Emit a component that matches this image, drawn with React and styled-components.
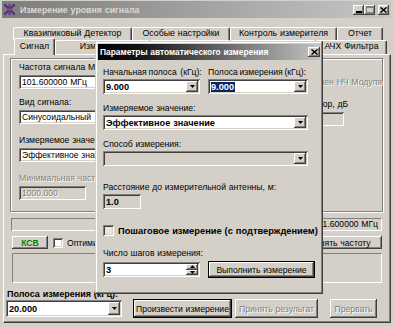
import React from 'react'
import styled, { createGlobalStyle } from 'styled-components'

const GlobalStyle = createGlobalStyle`
  html, body { margin: 0; padding: 0; background: #d4d0c8; }
  body {
    font-family: "Liberation Sans", Arial, sans-serif;
    font-size: 8.6px;
    word-spacing: 0.4px;
    color: #000;
  }
  * { box-sizing: border-box; }
`

const raised = `
  background: #d4d0c8;
  box-shadow: inset -1px -1px #404040, inset 1px 1px #fff, inset -2px -2px #808080, inset 2px 2px #d4d0c8;
`

const sunken = `
  box-shadow: inset 1px 1px #808080, inset -1px -1px #fff, inset 2px 2px #404040, inset -2px -2px #d4d0c8;
`

const Window = styled.div`
  position: relative;
  width: 393px;
  height: 327px;
  overflow: hidden;
  background: #d4d0c8;
  display: flex;
  flex-direction: column;
`

const TitleBar = styled.div`
  height: 17px;
  margin: 1px 2px 0;
  padding: 0 2px 0 1px;
  display: flex;
  align-items: center;
  gap: 4px;
  background: linear-gradient(90deg, #7c7c7c, #c6c6c6);
`

const TitleText = styled.span`
  color: #dcd8d0;
  font-weight: bold;
  font-size: 8.8px;
  white-space: nowrap;
`

const CaptionButtons = styled.div`
  margin-left: auto;
  display: flex;
`

const CaptionButton = styled.div`
  ${raised};
  width: 11px;
  height: 10px;
  margin-left: ${({ $gap }) => $gap || 0}px;
  display: flex;
  align-items: center;
  justify-content: center;
`

const TabStrip = styled.div`
  margin-top: 9px;
  display: flex;
  flex-direction: column;
`

const TabRow = styled.div`
  display: flex;
  height: ${({ $h }) => $h}px;
  margin-left: ${({ $left }) => $left}px;
  position: relative;
  z-index: ${({ $z }) => $z};
`

const Tab = styled.div`
  width: ${({ $w }) => $w}px;
  height: ${({ $active }) => ($active ? 'calc(100% + 3px)' : '100%')};
  margin-top: ${({ $active }) => ($active ? -2 : 0)}px;
  background: #d4d0c8;
  border-top: 1px solid #fff;
  border-left: 1px solid #fff;
  border-right: 1px solid #404040;
  box-shadow: inset -1px 0 #808080;
  border-radius: 2px 2px 0 0;
  display: flex;
  justify-content: center;
  font-size: 8.8px;
  line-height: 10px;
  padding-top: ${({ $active }) => ($active ? 2 : 0)}px;
  white-space: nowrap;
  overflow: hidden;
`

const Page = styled.div`
  margin-left: 3px;
  width: 388px;
  height: 269px;
  border: 1px solid;
  border-color: #fff #404040 #404040 #fff;
  box-shadow: inset -1px -1px #808080;
  display: flex;
  flex-direction: column;
  position: relative;
  z-index: 1;
`

const GroupBox = styled.div`
  margin: 3px 7px 0 6px;
  height: 154px;
  border: 1px solid #808080;
  box-shadow: inset 1px 1px #fff, 1px 1px #fff;
  display: flex;
  justify-content: space-between;
  padding: 3px 7px 0 8px;
`

const Column = styled.div`
  width: ${({ $w }) => $w}px;
  display: flex;
  flex-direction: column;
`

const FieldLabel = styled.div`
  height: 10px;
  line-height: 10px;
  margin-top: ${({ $mt }) => $mt || 0}px;
  margin-left: ${({ $ml }) => $ml || 0}px;
  color: ${({ $disabled }) => ($disabled ? '#808080' : '#000')};
  text-shadow: ${({ $disabled }) => ($disabled ? '1px 1px #fff' : 'none')};
  word-spacing: ${({ $tight }) => ($tight ? '-0.6px' : 'inherit')};
  white-space: pre;
`

const Edit = styled.div`
  ${sunken};
  margin-top: ${({ $mt }) => $mt || 0}px;
  width: ${({ $w }) => $w}px;
  height: ${({ $h }) => $h || 14}px;
  background: ${({ $bg }) => $bg || '#fff'};
  color: ${({ $disabled }) => ($disabled ? '#808080' : '#000')};
  text-shadow: ${({ $disabled }) => ($disabled ? '1px 1px #fff' : 'none')};
  font-weight: ${({ $bold }) => ($bold ? 'bold' : 'normal')};
  font-size: ${({ $bold }) => ($bold ? '9.2px' : 'inherit')};
  padding-left: 3px;
  display: flex;
  align-items: center;
  white-space: nowrap;
  overflow: hidden;
  flex-shrink: 0;
`

const CheckRow = styled.div`
  margin-top: ${({ $mt }) => $mt || 0}px;
  height: 11px;
  display: flex;
  align-items: center;
  gap: ${({ $gap }) => $gap || 4}px;
  font-weight: ${({ $bold }) => ($bold ? 'bold' : 'normal')};
  font-size: ${({ $bold }) => ($bold ? '9.3px' : 'inherit')};
  color: ${({ $disabled }) => ($disabled ? '#808080' : '#000')};
  text-shadow: ${({ $disabled }) => ($disabled ? '1px 1px #fff' : 'none')};
  white-space: nowrap;
`

const CheckBox = styled.div`
  ${sunken};
  width: ${({ $size }) => $size || 10}px;
  height: ${({ $size }) => $size || 10}px;
  background: ${({ $bg }) => $bg || '#fff'};
  flex-shrink: 0;
  margin-left: ${({ $ml }) => $ml || 0}px;
`

const FreqRow = styled.div`
  margin: 6px 8px 0 7px;
  height: 13px;
  display: flex;
  gap: 3px;
`

const StaticField = styled.div`
  flex: ${({ $grow }) => ($grow ? 1 : 'none')};
  width: ${({ $w }) => ($w ? `${$w}px` : 'auto')};
  border: 1px solid;
  border-color: #808080 #fff #fff #808080;
  text-align: right;
  padding-right: 3px;
  line-height: 11px;
  white-space: nowrap;
  overflow: hidden;
`

const ButtonRow = styled.div`
  margin: 5px 8px 0;
  height: 13px;
  display: flex;
  align-items: center;
`

const Button = styled.div`
  ${raised};
  width: ${({ $w }) => $w}px;
  height: ${({ $h }) => $h}px;
  margin-left: ${({ $ml }) => ($ml === 'auto' ? 'auto' : `${$ml || 0}px`)};
  border: ${({ $default }) => ($default ? '1px solid #000' : 'none')};
  color: ${({ $color, $disabled }) => ($disabled ? '#808080' : $color || '#000')};
  text-shadow: ${({ $disabled }) => ($disabled ? '1px 1px #fff' : 'none')};
  font-weight: ${({ $bold }) => ($bold ? 'bold' : 'normal')};
  display: flex;
  align-items: center;
  justify-content: center;
  white-space: nowrap;
  overflow: hidden;
  flex-shrink: 0;
`

const PanelBox = styled.div`
  margin: 4px 8px 0;
  height: 30px;
  border: 1px solid;
  border-color: #808080 #fff #fff #808080;
`

const BottomLabel = styled.div`
  margin: 6px 0 0 3px;
  height: 10px;
  line-height: 10px;
  font-weight: bold;
  font-size: 9px;
  white-space: nowrap;
`

const BottomRow = styled.div`
  margin-left: 2px;
  height: 19px;
  display: flex;
  align-items: center;
`

const Combo = styled.div`
  ${sunken};
  width: ${({ $w }) => $w}px;
  height: ${({ $h }) => $h || 15}px;
  margin-top: ${({ $mt }) => $mt || 0}px;
  background: ${({ $bg }) => $bg || '#fff'};
  display: flex;
  align-items: center;
  padding: 0 2px 0 3px;
  font-weight: bold;
  font-size: 9.2px;
  white-space: nowrap;
  flex-shrink: 0;
`

const DropButton = styled.div`
  ${raised};
  margin-left: auto;
  width: 12px;
  height: ${({ $h }) => $h || 11}px;
  display: flex;
  align-items: center;
  justify-content: center;
  flex-shrink: 0;
`

const SpinButtons = styled.div`
  margin-left: auto;
  width: 12px;
  height: 11px;
  display: flex;
  flex-direction: column;
`

const SpinHalf = styled.div`
  ${raised};
  flex: 1;
  display: flex;
  align-items: center;
  justify-content: center;
`

const Highlight = styled.span`
  background: #0a246a;
  color: #fff;
  padding-right: 1px;
`

const Dialog = styled.div`
  position: absolute;
  left: 95px;
  top: 41px;
  width: 228px;
  height: 253px;
  z-index: 5;
  background: #d4d0c8;
  box-shadow: inset -1px -1px #404040, inset 1px 1px #d4d0c8, inset -2px -2px #808080, inset 2px 2px #fff;
  padding: 3px;
  display: flex;
  flex-direction: column;
`

const DialogTitle = styled.div`
  height: 16px;
  flex-shrink: 0;
  background: linear-gradient(90deg, #000 0%, #141414 18%, #c4c4c4 100%);
  color: #fff;
  font-weight: bold;
  font-size: 8.4px;
  padding-left: 2px;
  display: flex;
  align-items: center;
  white-space: nowrap;
`

const DialogClose = styled.div`
  ${raised};
  margin-left: auto;
  width: 12px;
  height: 10px;
  display: flex;
  align-items: center;
  justify-content: center;
`

const DialogBody = styled.div`
  padding: 0 5px;
  display: flex;
  flex-direction: column;
`

const TwoCols = styled.div`
  margin-top: ${({ $mt }) => $mt || 0}px;
  display: grid;
  grid-template-columns: 97px 100px;
  column-gap: 8px;
`

const Cell = styled.div`
  display: flex;
  flex-direction: column;
`

const ActionRow = styled.div`
  margin-top: 3px;
  height: 17px;
  display: flex;
  align-items: center;
  gap: 8px;
`

const Glyph = styled.svg`
  display: block;
  flex-shrink: 0;
`

const AppIcon = () => (
  <Glyph width="13" height="13" viewBox="0 0 13 13">
    <path d="M2 2 L11 11 M11 2 L2 11" stroke="#5b2d8c" strokeWidth="2.4" strokeLinecap="round" />
    <path d="M6.5 1 L6.5 12" stroke="#2c3fa8" strokeWidth="1.6" />
    <circle cx="6.5" cy="6.5" r="1.6" fill="#c0306a" />
  </Glyph>
)

const MinGlyph = () => (
  <Glyph width="6" height="6" viewBox="0 0 6 6">
    <rect x="0" y="4" width="6" height="2" fill="#000" />
  </Glyph>
)

const MaxGlyph = () => (
  <Glyph width="8" height="7" viewBox="0 0 8 7">
    <rect x="0.5" y="0.5" width="7" height="6" fill="none" stroke="#808080" />
    <rect x="0" y="0" width="8" height="2" fill="#808080" />
  </Glyph>
)

const CloseGlyph = () => (
  <Glyph width="7" height="6" viewBox="0 0 7 6">
    <path d="M0.5 0.5 L6.5 5.5 M6.5 0.5 L0.5 5.5" stroke="#000" strokeWidth="1.5" />
  </Glyph>
)

const DownArrow = () => (
  <Glyph width="5" height="3" viewBox="0 0 5 3">
    <path d="M0 0 H5 L2.5 3 Z" fill="#000" />
  </Glyph>
)

const UpArrow = () => (
  <Glyph width="5" height="3" viewBox="0 0 5 3">
    <path d="M0 3 H5 L2.5 0 Z" fill="#000" />
  </Glyph>
)

const backTabs = [
  { title: 'Квазипиковый Детектор', w: 119 },
  { title: 'Особые настройки', w: 98 },
  { title: 'Контроль измерителя', w: 107 },
  { title: 'Отчет', w: 46 },
]

const frontTabs = [
  { title: 'Сигнал', w: 41, active: true },
  { title: 'Измерение', w: 95 },
  { title: 'Калибровка', w: 80 },
  { title: 'Генератор', w: 86 },
  { title: 'АЧХ Фильтра', w: 71 },
]

const App = () => {
  return (
    <Window>
      <GlobalStyle />
      <TitleBar>
        <AppIcon />
        <TitleText>Измерение уровня сигнала</TitleText>
        <CaptionButtons>
          <CaptionButton><MinGlyph /></CaptionButton>
          <CaptionButton><MaxGlyph /></CaptionButton>
          <CaptionButton $gap={3}><CloseGlyph /></CaptionButton>
        </CaptionButtons>
      </TitleBar>

      <TabStrip>
        <TabRow $h={13} $left={13} $z={0}>
          {backTabs.map((t) => (
            <Tab key={t.title} $w={t.w}>{t.title}</Tab>
          ))}
        </TabRow>
        <TabRow $h={14} $left={14} $z={2}>
          {frontTabs.map((t) => (
            <Tab key={t.title} $w={t.w} $active={t.active}>{t.title}</Tab>
          ))}
        </TabRow>
      </TabStrip>

      <Page>
        <GroupBox>
          <Column $w={140}>
            <FieldLabel>Частота сигнала МГц:</FieldLabel>
            <Edit $mt={3} $w={130}>101.600000 МГц</Edit>
            <FieldLabel $mt={8}>Вид сигнала:</FieldLabel>
            <Edit $mt={3} $w={130}>Синусоидальный</Edit>
            <FieldLabel $mt={11}>Измеряемое значение:</FieldLabel>
            <Edit $mt={3} $w={130}>Эффективное значение</Edit>
            <FieldLabel $mt={11} $disabled>Минимальная частота, МГц:</FieldLabel>
            <Edit $mt={3} $w={67} $bg="#d4d0c8" $disabled>1000.000</Edit>
          </Column>
          <Column $w={90}>
            <CheckRow $mt={14} $disabled>
              <CheckBox $bg="#d4d0c8" />
              Включен НЧ Модуля
            </CheckRow>
            <FieldLabel $mt={12}>Аттенюатор, дБ</FieldLabel>
            <Edit $mt={3} $w={59} $bg="#d4d0c8" />
          </Column>
        </GroupBox>

        <FreqRow>
          <StaticField $grow />
          <StaticField $w={90}>101.600000 МГц</StaticField>
        </FreqRow>

        <ButtonRow>
          <Button $w={36} $h={13} $bold $color="#008000">КСВ</Button>
          <CheckBox $ml={5} />
          <FieldLabel $ml={4}>Оптимизация</FieldLabel>
          <Button $w={100} $h={13} $ml="auto">Применять частоту</Button>
        </ButtonRow>

        <PanelBox />

        <BottomLabel>Полоса измерения (кГц):</BottomLabel>
        <BottomRow>
          <Combo $w={116} $h={17}>
            20.000
            <DropButton $h={13}><DownArrow /></DropButton>
          </Combo>
          <Button $w={99} $h={19} $ml={11} $default>Произвести измерение</Button>
          <Button $w={83} $h={19} $ml={3} $disabled>Принять результат</Button>
          <Button $w={47} $h={19} $ml={12} $disabled>Прервать</Button>
        </BottomRow>
      </Page>

      <Dialog>
        <DialogTitle>
          Параметры автоматического измерения
          <DialogClose><CloseGlyph /></DialogClose>
        </DialogTitle>
        <DialogBody>
          <TwoCols $mt={7}>
            <Cell>
              <FieldLabel $tight>Начальная полоса  (кГц):</FieldLabel>
              <Combo $w={97} $mt={2}>
                9.000
                <DropButton><DownArrow /></DropButton>
              </Combo>
            </Cell>
            <Cell>
              <FieldLabel $tight>Полоса измерения (кГц):</FieldLabel>
              <Combo $w={100} $mt={2}>
                <Highlight>9.000</Highlight>
                <DropButton><DownArrow /></DropButton>
              </Combo>
            </Cell>
          </TwoCols>

          <FieldLabel $mt={9}>Измеряемое значение:</FieldLabel>
          <Combo $w={205} $mt={2}>
            Эффективное  значение
            <DropButton><DownArrow /></DropButton>
          </Combo>

          <FieldLabel $mt={9}>Способ измерения:</FieldLabel>
          <Combo $w={205} $mt={2} $bg="#d4d0c8">
            <DropButton><DownArrow /></DropButton>
          </Combo>

          <FieldLabel $mt={16}>Расстояние до измерительной антенны, м:</FieldLabel>
          <Edit $mt={2} $w={38} $h={15} $bg="#d4d0c8" $bold>1.0</Edit>

          <CheckRow $mt={16} $gap={4} $bold>
            <CheckBox $size={11} $bg="#e8e6e2" />
            Пошаговое измерение (с подтверждением)
          </CheckRow>

          <FieldLabel $mt={12}>Число шагов измерения:</FieldLabel>
          <ActionRow>
            <Combo $w={97}>
              3
              <SpinButtons>
                <SpinHalf><UpArrow /></SpinHalf>
                <SpinHalf><DownArrow /></SpinHalf>
              </SpinButtons>
            </Combo>
            <Button $w={107} $h={17} $default>Выполнить измерение</Button>
          </ActionRow>
        </DialogBody>
      </Dialog>
    </Window>
  )
}

export default App
